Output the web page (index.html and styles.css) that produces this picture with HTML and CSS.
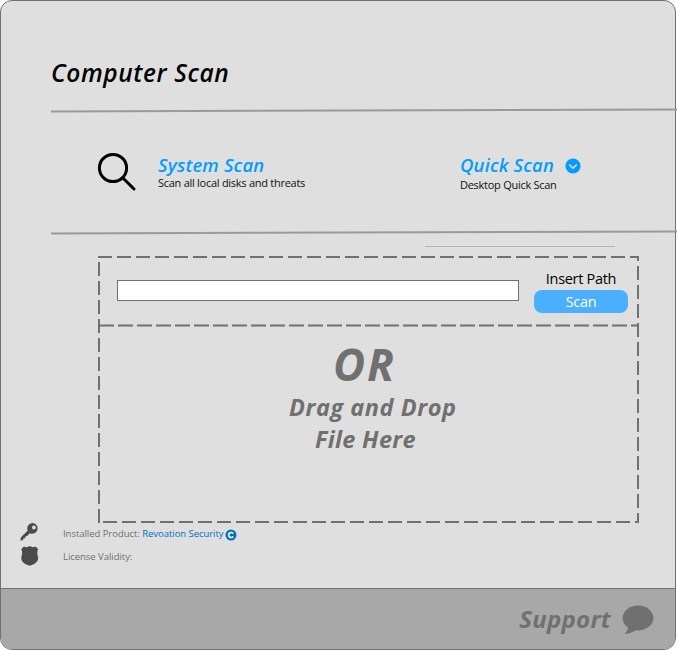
FILE: index.html
```html
<!DOCTYPE html>
<html lang="en">
<head>
<meta charset="utf-8">
<title>Computer Scan</title>
<link rel="stylesheet" href="styles.css">
</head>
<body>
<main class="panel">
  <header class="header"><h1>Computer Scan</h1></header>
  <svg class="divider" width="626" height="4" viewBox="0 0 626 4"><path d="M0 2.5L626 .5"/></svg>
  <section class="options">
    <svg class="search-icon" width="40" height="40" viewBox="0 0 40 40"><circle cx="16" cy="16" r="13.6"/><path d="M25.7 25.7L37 37"/></svg>
    <div class="option system">
      <h2>System Scan</h2>
      <p>Scan all local disks and threats</p>
    </div>
    <div class="option quick">
      <h2><span>Quick Scan</span>
        <svg width="16" height="16" viewBox="0 0 16 16"><circle cx="8" cy="8" r="7.6" fill="#009dff"/><path d="M4.2 6.5L8 10.2l3.8-3.7" fill="none" stroke="#dfdfdf" stroke-width="1.5"/></svg></h2>
      <p>Desktop Quick Scan</p>
    </div>
  </section>
  <svg class="divider" width="626" height="4" viewBox="0 0 626 4"><path d="M0 2.5L626 .5"/></svg>
  <div class="short-rule"></div>
  <section class="drop">
    <svg class="outline" width="541" height="267" viewBox="0 0 541 267">
      <path d="M0 1H541"/>
      <path d="M540 0V267" stroke-dashoffset="9"/>
      <path d="M0 266H541" stroke-dashoffset="14"/>
      <path d="M1 0V267" stroke-dashoffset="13"/>
      <path class="split" d="M1 69.5H540"/>
    </svg>
    <div class="path-row">
      <input class="path" type="text" aria-label="Path">
      <div class="path-action">
        <label>Insert Path</label>
        <button type="button">Scan</button>
      </div>
    </div>
    <div class="target">
      <div class="or">OR</div>
      <div class="drag">Drag and Drop</div>
      <div class="file">File Here</div>
    </div>
  </section>
  <section class="license">
    <div class="row">
      <svg class="key" width="20" height="20" viewBox="0 0 20 20"><path fill-rule="evenodd" d="M12.7 1a5.4 5.4 0 0 0-5 7.6L.8 15.4.4 18.6l2.5-.4.5-1.8 1.8-.4.4-1.8 1.6-.3 2.6-2.7A5.4 5.4 0 1 0 12.7 1zm1.2 2.6a1.9 1.9 0 1 1 0 3.8 1.9 1.9 0 0 1 0-3.8z"/></svg>
      <p>Installed Product: <a>Revoation Security</a></p>
      <svg class="badge" width="12" height="12" viewBox="0 0 12 12"><circle cx="6" cy="6" r="5.5"/><path d="M8.2 4.5A2.5 2.5 0 1 0 8.2 7.5"/></svg>
    </div>
    <div class="row second">
      <svg class="shield" width="20" height="20" viewBox="0 0 20 20"><path d="M1.2 3.2L3.8.5C6 1.5 7.7 1.3 9.7 0c2 1.3 3.7 1.5 5.9.5l2.6 2.7c-1.5 2.5-1 4.8-.3 7.2 1.2 4.5-2.2 7.3-8.2 9.3-6-2-9.4-4.8-8.2-9.3.7-2.4 1.2-4.7-.3-7.2z"/></svg>
      <p>License Validity:</p>
    </div>
  </section>
  <footer class="footer">
    <span>Support</span>
    <svg width="32" height="30" viewBox="0 0 32 30"><ellipse cx="16" cy="13" rx="15.4" ry="12.5"/><path d="M5.8 22c.4 3-1 5-3.5 6.5 5 .8 9.7-1.6 12.5-4.3z"/></svg>
  </footer>
</main>
</body>
</html>
```
FILE: styles.css
```css
* { box-sizing: border-box; }
body { margin: 0; background: #fff; font-family: "Open Sans", "Noto Sans", sans-serif; }
h1, h2, p { margin: 0; }
span, a { white-space: nowrap; }
svg { display: block; flex: none; }

.panel {
  width: 676px; height: 650px;
  display: flex; flex-direction: column;
  background: #dfdfdf;
  border: 1px solid #707070; border-radius: 12px;
}
.header { height: 108px; padding: 55px 0 0 50px; flex: none; }
h1 { font-size: 24.5px; line-height: 34px; font-weight: 600; font-style: italic; letter-spacing: .6px; color: #000; }
.divider { margin-left: 50px; overflow: visible; }
.divider path { stroke: #9a9a9a; stroke-width: 2; }

.options { display: flex; height: 118px; flex: none; padding-left: 96px; }
.search-icon { margin-top: 39px; fill: none; stroke: #000; stroke-width: 3; stroke-linecap: round; }
.option h2 { display: flex; align-items: center; font-size: 18.5px; line-height: 24px; font-weight: 600; font-style: italic; letter-spacing: .15px; color: #009dff; }
.option p { font-size: 11px; line-height: 14px; letter-spacing: -.27px; color: #111; white-space: nowrap; }
.system { width: 302px; margin: 40px 0 0 21px; }
.system p { margin-top: -1px; }
.quick { margin-top: 40px; }
.quick h2 svg { margin-left: 11px; margin-top: 2px; }
.quick p { margin-top: 1px; }

.short-rule { width: 190px; height: 1px; margin: 11px 0 9px 424px; background: #b5b5b5; flex: none; }

.drop { position: relative; width: 541px; height: 267px; margin-left: 97px; flex: none; }
.outline { position: absolute; inset: 0; pointer-events: none; }
.outline path { fill: none; stroke: #707070; stroke-width: 2; stroke-dasharray: 14 5; }
.outline .split { stroke-dasharray: 15 4; }
.path-row { display: flex; height: 70px; padding-left: 19px; }
.path { width: 402px; height: 21px; margin: 24px 15px 0 0; padding: 0 4px; border: 1px solid #707070; background: #fff; border-radius: 0; }
.path-action { width: 94px; padding-top: 12px; text-align: center; }
.path-action label { display: block; font-size: 14.5px; line-height: 22px; letter-spacing: -.3px; color: #000; }
.path-action button { display: block; width: 94px; height: 23px; padding: 0; border: 0; border-radius: 8px; background: #4aafff; color: #fff; font: 14.5px/22px "Open Sans", sans-serif; letter-spacing: -.3px; }
.target { color: #707070; font-weight: 700; font-style: italic; }
.or { padding: 11px 0 0 235px; font-size: 44px; line-height: 54px; letter-spacing: 2px; }
.drag { padding-left: 191px; font-size: 23.5px; line-height: 32px; letter-spacing: .55px; }
.file { padding-left: 217px; font-size: 23.5px; line-height: 32px; letter-spacing: .3px; }

.license { height: 65px; flex: none; padding: 0 0 0 19px; font-size: 9.5px; letter-spacing: -.04px; color: #707070; }
.row { display: flex; align-items: center; height: 22px; fill: #4b4b4b; }
.row.second { margin-top: 1px; }
.row p { margin-left: 23px; line-height: 22px; }
.row a { color: #0072bc; }
.key { margin-top: -4px; }
.shield { margin-top: -2px; }
.badge { margin: 1px 0 0 1px; fill: #0072bc; }
.badge path { fill: none; stroke: #fff; stroke-width: 1.6; }

.footer {
  flex: 1; display: flex; align-items: center; justify-content: flex-end;
  padding: 0 21px 1px 0; gap: 11px;
  background: #a8a8a8; border-top: 1px solid #707070; border-radius: 0 0 11px 11px;
  color: #707070; font-size: 24px; font-weight: 700; font-style: italic; letter-spacing: .3px;
}
.footer svg { fill: #707070; margin-top: 2px; }
```
